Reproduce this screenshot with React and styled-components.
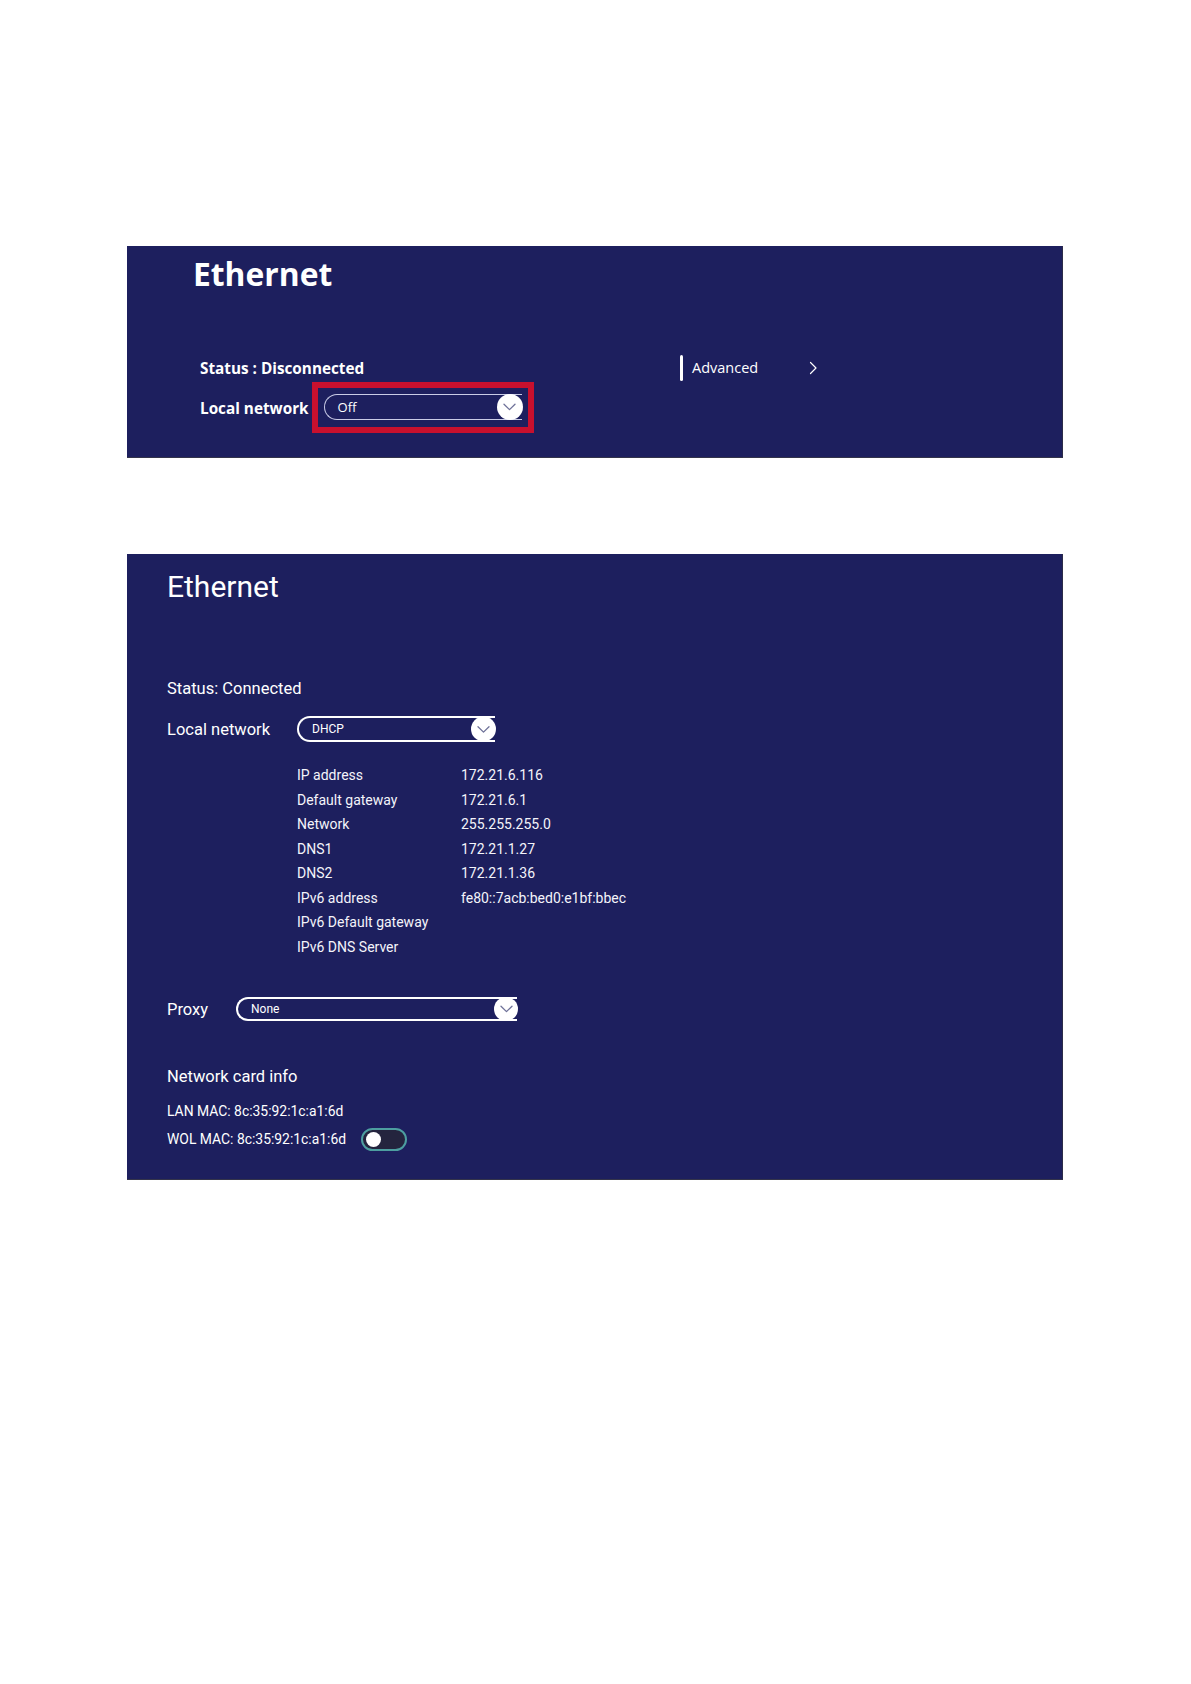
import React from "react";
import styled, { createGlobalStyle } from "styled-components";

const Global = createGlobalStyle`
  html, body { margin: 0; padding: 0; background: #ffffff; }
  body { width: 1191px; min-height: 1684px; }
`;

const Page = styled.div`
  display: flex;
  flex-direction: column;
  padding: 246px 0 0 127px;
  gap: 96px;
`;

const Panel = styled.section`
  box-sizing: border-box;
  width: 936px;
  background: #1d1f5e;
  color: #ffffff;
  display: flex;
  flex-direction: column;
  border-bottom: 1px solid #34344a;
  border-right: 1px solid #2c2c48;
`;

/* ---------- Panel 1 (Open Sans) ---------- */

const P1 = styled(Panel)`
  font-family: "Open Sans", "Liberation Sans", sans-serif;
  padding: 8px 0 24px 0;
`;

const BoldTitle = styled.h1`
  margin: 0 0 0 66px;
  font-size: 31.8px;
  line-height: 40px;
  font-weight: 700;
`;

const P1Body = styled.div`
  display: flex;
  margin: 62px 0 0 73px;
`;

const P1Left = styled.div`
  width: 480px;
  display: flex;
  flex-direction: column;
  gap: 2px;
`;

const BoldText = styled.div`
  font-size: 15.3px;
  font-weight: 700;
  line-height: 24px;
  height: 24px;
  white-space: nowrap;
`;

const P1Row = styled.div`
  display: flex;
  align-items: center;
  gap: 3px;
`;

const Highlight = styled.div`
  box-sizing: border-box;
  border: 6px solid #c8102e;
  padding: 6px 6px 7px 6px;
  width: 222px;
  height: 51px;
`;

const AdvancedItem = styled.div`
  display: flex;
  align-items: center;
  height: 24px;
`;

const Bar = styled.span`
  width: 3px;
  height: 26px;
  border-radius: 2px;
  background: #ffffff;
  margin-right: 9px;
`;

const AdvText = styled.span`
  font-size: 14.5px;
  line-height: 24px;
  width: 117px;
`;

/* ---------- Dropdown ---------- */

const Pill = styled.div`
  box-sizing: border-box;
  position: relative;
  width: ${(p) => p.$w}px;
  height: ${(p) => p.$h}px;
  border: ${(p) => p.$bw}px solid ${(p) => p.$bc};
  border-right: none;
  border-radius: ${(p) => p.$h / 2}px 0 0 ${(p) => p.$h / 2}px;
  display: flex;
  align-items: center;
  padding-left: ${(p) => p.$pl}px;
  font-family: ${(p) => p.$font};
  font-size: ${(p) => p.$fs}px;
  color: #ffffff;
`;

const Knob = styled.span`
  position: absolute;
  right: -1px;
  top: 50%;
  transform: translateY(-50%);
  width: ${(p) => p.$d}px;
  height: ${(p) => p.$d}px;
  border-radius: 50%;
  background: #ffffff;
  display: flex;
  align-items: center;
  justify-content: center;
`;

const Chevron = () => (
  <svg width="13" height="8" viewBox="0 0 13 8" fill="none">
    <polyline points="1,1.2 6.5,6.6 12,1.2" stroke="#6f7299" strokeWidth="1.3" strokeLinecap="round" strokeLinejoin="round" />
  </svg>
);

const Dropdown = ({ label, w, h, bw, bc, pl, font, fs, d }) => (
  <Pill $w={w} $h={h} $bw={bw} $bc={bc} $pl={pl} $font={font} $fs={fs}>
    {label}
    <Knob $d={d}>
      <Chevron />
    </Knob>
  </Pill>
);

/* ---------- Panel 2 (Roboto) ---------- */

const P2 = styled(Panel)`
  font-family: Roboto, "Liberation Sans", sans-serif;
  padding: 15px 0 27px 40px;
`;

const LightTitle = styled.h1`
  margin: 0;
  font-size: 30px;
  line-height: 36px;
  font-weight: 400;
`;

const Text = styled.div`
  font-size: ${(p) => p.$fs || 16.5}px;
  line-height: ${(p) => p.$lh || 24}px;
  white-space: nowrap;
  margin-top: ${(p) => p.$mt || 0}px;
`;

const FieldRow = styled.div`
  display: flex;
  align-items: center;
  height: ${(p) => p.$h}px;
  margin-top: ${(p) => p.$mt}px;
`;

const FieldLabel = styled.span`
  font-size: 16.5px;
  width: ${(p) => p.$w}px;
  flex: none;
`;

const InfoGrid = styled.div`
  display: grid;
  grid-template-columns: 164px auto;
  grid-auto-rows: 24.5px;
  margin: 21px 0 0 130px;
  font-size: 14px;
  align-items: center;
  color: #f4f4fa;
`;

const MacRow = styled.div`
  display: flex;
  align-items: center;
  height: 26px;
  margin-top: 4px;
  font-size: 13.9px;
  gap: 15px;
`;

const Toggle = styled.span`
  box-sizing: border-box;
  width: 46px;
  height: 23px;
  border-radius: 12px;
  border: 2px solid #4d9ea0;
  background: #24243e;
  display: flex;
  align-items: center;
  padding-left: 3px;
`;

const ToggleKnob = styled.span`
  width: 15px;
  height: 15px;
  border-radius: 50%;
  background: #ffffff;
`;

const info = [
  ["IP address", "172.21.6.116"],
  ["Default gateway", "172.21.6.1"],
  ["Network", "255.255.255.0"],
  ["DNS1", "172.21.1.27"],
  ["DNS2", "172.21.1.36"],
  ["IPv6 address", "fe80::7acb:bed0:e1bf:bbec"],
  ["IPv6 Default gateway", ""],
  ["IPv6 DNS Server", ""],
];

export default function App() {
  return (
    <>
      <Global />
      <Page>
        <P1>
          <BoldTitle>Ethernet</BoldTitle>
          <P1Body>
            <P1Left>
              <BoldText>Status : Disconnected</BoldText>
              <P1Row>
                <BoldText>Local network</BoldText>
                <Highlight>
                  <Dropdown
                    label="Off"
                    w={198}
                    h={26}
                    bw={1.5}
                    bc="#c9cbe6"
                    pl={13}
                    font={'"Open Sans", "Liberation Sans", sans-serif'}
                    fs={13}
                    d={26}
                  />
                </Highlight>
              </P1Row>
            </P1Left>
            <AdvancedItem>
              <Bar />
              <AdvText>Advanced</AdvText>
              <svg width="9" height="14" viewBox="0 0 9 14" fill="none">
                <polyline points="1.5,1.5 7,7 1.5,12.5" stroke="#ffffff" strokeWidth="1.2" strokeLinecap="round" strokeLinejoin="round" />
              </svg>
            </AdvancedItem>
          </P1Body>
        </P1>

        <P2>
          <LightTitle>Ethernet</LightTitle>
          <Text $mt={72}>Status: Connected</Text>
          <FieldRow $h={26} $mt={15}>
            <FieldLabel $w={130}>Local network</FieldLabel>
            <Dropdown
              label="DHCP"
              w={198}
              h={26}
              bw={2}
              bc="#ffffff"
              pl={13}
              font={'Roboto, "Liberation Sans", sans-serif'}
              fs={12}
              d={25}
            />
          </FieldRow>
          <InfoGrid>
            {info.map(([k, v]) => (
              <React.Fragment key={k}>
                <span>{k}</span>
                <span>{v}</span>
              </React.Fragment>
            ))}
          </InfoGrid>
          <FieldRow $h={26} $mt={37}>
            <FieldLabel $w={69}>Proxy</FieldLabel>
            <Dropdown
              label="None"
              w={281}
              h={24}
              bw={2}
              bc="#ffffff"
              pl={13}
              font={'Roboto, "Liberation Sans", sans-serif'}
              fs={12}
              d={24}
            />
          </FieldRow>
          <Text $mt={43}>Network card info</Text>
          <Text $fs={13.9} $lh={22} $mt={11}>LAN MAC: 8c:35:92:1c:a1:6d</Text>
          <MacRow>
            <span>WOL MAC: 8c:35:92:1c:a1:6d</span>
            <Toggle>
              <ToggleKnob />
            </Toggle>
          </MacRow>
        </P2>
      </Page>
    </>
  );
}
